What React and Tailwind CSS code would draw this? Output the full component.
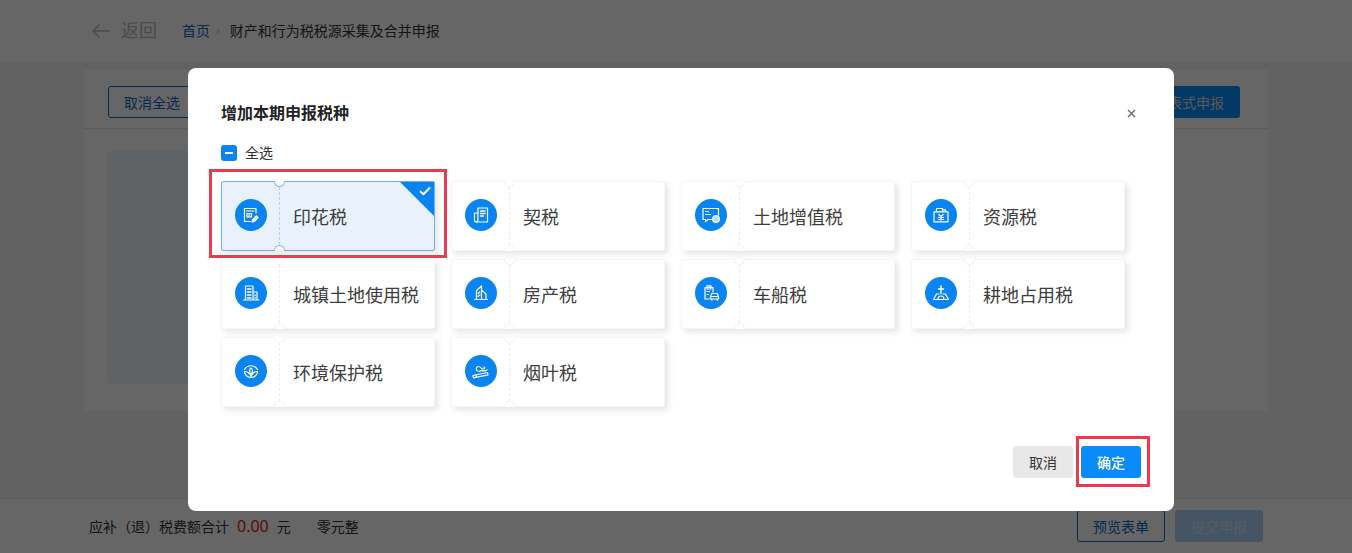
import React from "react";

const taxes = [
  { name: "印花税", icon: StampIcon, checked: true },
  { name: "契税", icon: DeedIcon },
  { name: "土地增值税", icon: LandIcon },
  { name: "资源税", icon: ResourceIcon },
  { name: "城镇土地使用税", icon: CityIcon },
  { name: "房产税", icon: HouseIcon },
  { name: "车船税", icon: CarIcon },
  { name: "耕地占用税", icon: FarmIcon },
  { name: "环境保护税", icon: LotusIcon },
  { name: "烟叶税", icon: SmokeIcon },
];

function Svg({ children }) {
  return (
    <svg
      width="20"
      height="20"
      viewBox="0 0 20 20"
      fill="none"
      stroke="#fff"
      strokeWidth="1.2"
      strokeLinecap="round"
      strokeLinejoin="round"
    >
      {children}
    </svg>
  );
}

function StampIcon() {
  return (
    <Svg>
      <path d="M15 8V3.500H3.500v13h6" />
      <path d="M5.500 6h7.500M6 8.500h4.500V12H6zM8.200 8.500V12" />
      <path d="M11 17l.6-2.400 3.800-3.800 1.800 1.800-3.800 3.800z" fill="#fff" />
    </Svg>
  );
}

function DeedIcon() {
  return (
    <Svg>
      <path d="M7 8V3h9.500v14H5.500" />
      <path d="M7 8H3.500v7.300a1.700 1.700 0 0 0 3.400 0V8" />
      <path d="M9.500 6h4.500M9.500 8.500h4.500M9.500 11h3" strokeWidth="1.400" />
    </Svg>
  );
}

function LandIcon() {
  return (
    <Svg>
      <path d="M11 14.500H7l-2.500 2v-2H2V3.500h15.500V10" />
      <path d="M4.500 6.500h3M4.500 9.500h5" />
      <circle cx="15" cy="14" r="3.300" fill="#fff" fillOpacity=".7" />
    </Svg>
  );
}

function ResourceIcon() {
  return (
    <Svg>
      <path d="M5.500 6.500V3.500h6v3M11.500 4.800h3v1.700" />
      <path d="M3 6.800h14v10H3z" />
      <path d="M7.800 9.500L10 11.500l2.200-2M10 11.500v3.500M7.500 12.500h5M7.500 14.500h5" />
    </Svg>
  );
}

function CityIcon() {
  return (
    <Svg>
      <path d="M4.500 17V3h7.500v14M12 9h4v8M2.500 17h15.500" />
      <path d="M6.500 6h3.500M6.500 9h3.500M6.500 12h3.500M6.500 15h3.500M14 12v.500M14 14.500v.500" strokeWidth="1.400" />
    </Svg>
  );
}

function HouseIcon() {
  return (
    <Svg>
      <path d="M5.500 16.500V7.500L10.500 3v13.500M10.500 7l4.500 4v5.500M3.500 16.500h13" />
      <path d="M7 10.500l2-1.500M7 13.500l2-1.500" />
    </Svg>
  );
}

function CarIcon() {
  return (
    <Svg>
      <path d="M8 16H4V4.500h8v4.500" />
      <path d="M6 2.800h4v3.200H6z" />
      <path d="M6 8.500h2.500M6 11.500h1.500" />
      <path d="M9.500 16v-2.500l1.300-3h5.400l1.300 3V16zM9.800 13.500h7.400" />
      <path d="M10.800 16v1.300M16.200 16v1.300" />
    </Svg>
  );
}

function FarmIcon() {
  return (
    <Svg>
      <path d="M2.500 16.500h15l-3-5.500h-2.500M8 11H5.500l-3 5.500" />
      <path d="M10 3v7.500M7.500 6h5" strokeWidth="1.500" />
      <path d="M7 16.500c0-2 1.300-3.500 3-3.500s3 1.500 3 3.500" />
    </Svg>
  );
}

function LotusIcon() {
  return (
    <Svg>
      <path d="M3.500 8.500a7.500 7.500 0 0 1 13 0" />
      <path d="M10 7c2 1.500 2 4 0 6.500-2-2.500-2-5 0-6.500z" />
      <path d="M3.500 10.500c2.800 0 5 1.200 6.500 5 1.500-3.800 3.700-5 6.500-5 0 3.500-3 6-6.500 6s-6.500-2.500-6.500-6z" />
    </Svg>
  );
}

function SmokeIcon() {
  return (
    <Svg>
      <path d="M2.500 16.800l14.500-3-.6-2.300-14.500 3zM5.500 16.200l-.6-2.300" />
      <path d="M6.500 10c-2-1-1.500-4.500 1-4.500s2.500 2.500 4.500 2.500 2-1.500 1-2" />
      <path d="M8 10.500c1-1.200 3-1 4.500-.7s3 0 3.500-1" />
    </Svg>
  );
}

function TaxCard({ tax }) {
  const Icon = tax.icon;
  const notchBorder = tax.checked ? "border-[#7fb8ee]" : "border-[#f3f3f3]";
  return (
    <div
      className={`relative flex h-[70px] items-center rounded-[2px] border shadow-[3px_3px_6px_rgba(0,0,0,0.11)] ${
        tax.checked ? "border-[#6fb0ee] bg-[#e9f2fc]" : "border-[#f5f5f5] bg-white"
      }`}
    >
      <div className="flex w-[57px] shrink-0 justify-center pb-[3px]">
        <div className="flex h-8 w-8 items-center justify-center rounded-full bg-[#0a84f0]">
          <Icon />
        </div>
      </div>
      <div
        className={`h-full border-l border-dashed ${
          tax.checked ? "border-[#b4d3f2]" : "border-[#e6edf5]"
        }`}
      />
      <span className="pl-[13px] pt-[1px] text-[18px] leading-6 text-[#3d3d3d]">{tax.name}</span>
      <span
        className={`absolute left-[52px] top-[-1px] h-[6px] w-[11px] rounded-b-full border border-t-0 bg-white ${notchBorder}`}
      />
      <span
        className={`absolute bottom-[-1px] left-[52px] h-[6px] w-[11px] rounded-t-full border border-b-0 bg-white ${notchBorder}`}
      />
      {tax.checked && (
        <div className="absolute right-0 top-0 h-[34px] w-[34px] bg-[#0a84f0] [clip-path:polygon(0_0,100%_0,100%_100%)]">
          <svg className="absolute right-[2px] top-[2px]" width="14" height="14" viewBox="0 0 14 14" fill="none">
            <path d="M2.500 7.500l3 2.800 6-6.300" stroke="#fff" strokeWidth="2" strokeLinecap="round" strokeLinejoin="round" />
          </svg>
        </div>
      )}
    </div>
  );
}

export default function App() {
  return (
    <div className="relative h-[553px] w-[1352px] overflow-hidden bg-[#f6f6f6] font-['Noto_Sans','Noto_Sans_CJK_SC',sans-serif]">
      {/* page behind the dialog */}
      <div className="flex h-[61px] items-center bg-white pl-[91px]">
        <svg width="20" height="16" viewBox="0 0 20 16" fill="none" stroke="#bbb" strokeWidth="1.500">
          <path d="M19 8H2M8.500 1.500L2 8l6.500 6.500" />
        </svg>
        <span className="ml-[10px] text-[18px] text-[#bbb]">返回</span>
        <span className="ml-[25px] text-[14px] text-[#0b69c7]">首页</span>
        <span className="ml-[6px] text-[12px] text-[#bbb]">›</span>
        <span className="ml-[10px] text-[14px] text-[#333]">财产和行为税税源采集及合并申报</span>
      </div>

      <div className="mx-[84px] mt-[9px] h-[341px] bg-white">
        <div className="flex h-[59px] items-center justify-between border-b border-[#e6e6e6] pl-6 pr-7 pt-[6px]">
          <button className="h-8 w-[100px] rounded-[3px] border border-[#0b69c7] pr-[12px] text-[14px] text-[#0b69c7]">
            取消全选
          </button>
          <button className="h-8 w-[140px] rounded-[3px] bg-[#0a8ffc] pr-4 text-right text-[14px] text-[#ddd]">
            报表式申报
          </button>
        </div>
        <div className="ml-[23px] mt-[22px] h-[233px] w-[300px] rounded-[4px] bg-[#eff8fe]" />
      </div>

      <div className="absolute bottom-0 left-0 right-0 flex h-[55px] items-center border-t border-[#e6e6e6] bg-white pl-[89px] pr-[89px] text-[14px] text-[#333]">
        <span>应补（退）税费额合计</span>
        <span className="ml-[8px] text-[16px] text-[#e02020]">0.00</span>
        <span className="ml-[8px]">元</span>
        <span className="ml-[26px]">零元整</span>
        <div className="ml-auto flex gap-[10px]">
          <button className="h-8 w-[88px] rounded-[3px] border border-[#0b69c7] text-[14px] text-[#0b69c7]">
            预览表单
          </button>
          <button className="h-8 w-[88px] rounded-[3px] bg-[#acd4f8] text-[14px] text-[#d5e6f6]">
            提交申报
          </button>
        </div>
      </div>

      {/* overlay */}
      <div className="absolute inset-0 bg-black/60" />

      {/* dialog */}
      <div className="absolute left-[188px] top-[68px] flex h-[443px] w-[986px] flex-col rounded-[8px] bg-white px-[33px]">
        <div className="flex items-center justify-between pt-[33px]">
          <h2 className="text-[16px] font-bold leading-6 text-[#222]">增加本期申报税种</h2>
          <svg className="mr-[5px]" width="9" height="9" viewBox="0 0 9 9" stroke="#666" strokeWidth="1.200">
            <path d="M1 1l7 7M8 1L1 8" />
          </svg>
        </div>

        <div className="mt-[20px] flex items-center">
          <span className="flex h-4 w-4 items-center justify-center rounded-[3px] bg-[#0a84f0]">
            <span className="h-[2px] w-2 bg-white" />
          </span>
          <span className="ml-2 text-[14px] leading-4 text-[#333]">全选</span>
        </div>

        <div className="mt-[20px] grid w-[904px] grid-cols-4 gap-x-4 gap-y-2">
          {taxes.map((tax) => (
            <TaxCard key={tax.name} tax={tax} />
          ))}
        </div>

        <div className="mt-auto flex justify-end gap-2 pb-[33px]">
          <button className="h-8 w-[60px] rounded-[3px] bg-[#e8e8e8] text-[14px] text-[#333]">取消</button>
          <button className="h-8 w-[60px] rounded-[3px] bg-[#0a8bfa] text-[14px] font-medium text-white">确定</button>
        </div>
      </div>

      {/* red annotation boxes */}
      <div className="absolute left-[209px] top-[169px] h-[89px] w-[238px] border-[3px] border-[#ee3a50]" />
      <div className="absolute left-[1076px] top-[436px] h-[51px] w-[74px] border-[3px] border-[#ee3a50]" />
    </div>
  );
}
